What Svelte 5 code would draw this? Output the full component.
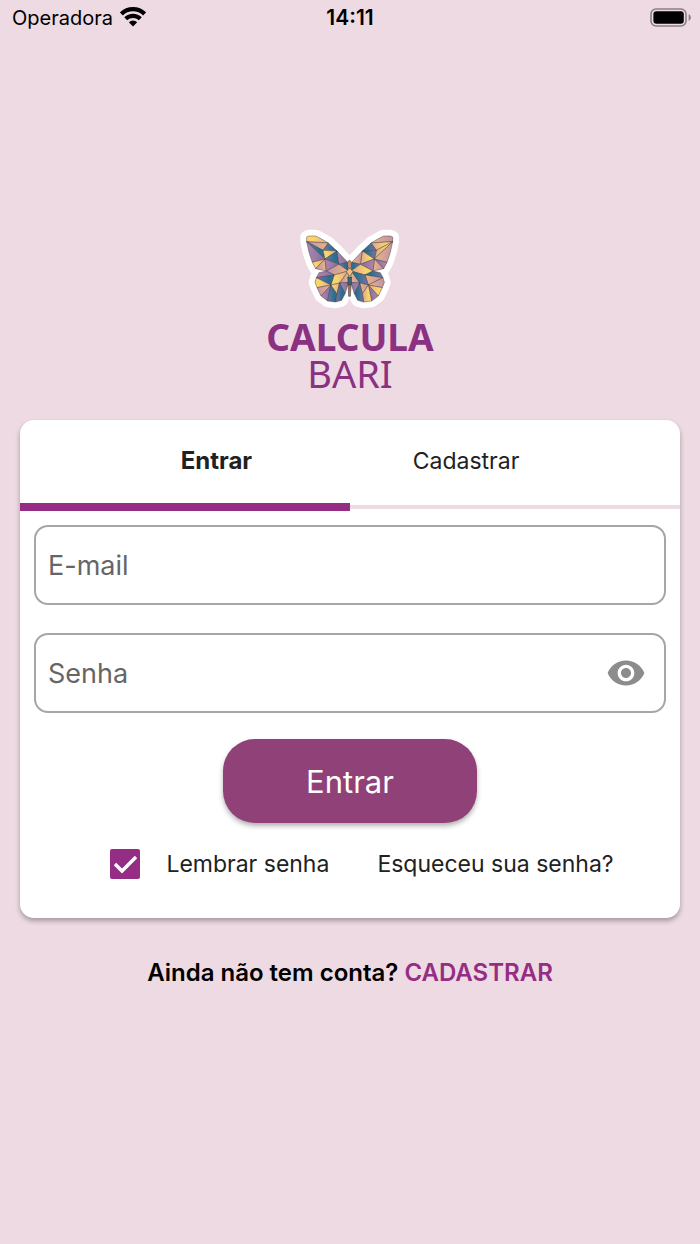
<script>
  let tab = "entrar";
  let email = "";
  let senha = "";
  let showSenha = false;
  let lembrar = true;

  // one side of the butterfly, the other one is mirrored with its own colours
  const wing = [
    { points: "35,36 42,33 62,33 78,41 100,54 35,50", left: "gold", right: "rose" },
    { points: "35,50 100,54 84,76", left: "rose", right: "gold" },
    { points: "35,50 84,76 90,102", left: "sea", right: "gold" },
    { points: "35,50 90,102 52,112 42,82", left: "plum", right: "rose" },
    { points: "52,112 90,102 62,131", left: "gold", right: "plum" },
    { points: "62,131 90,102 94,138", left: "rose", right: "rose" },
    { points: "84,76 100,54 126,78", left: "sea", right: "sea" },
    { points: "84,76 126,78 90,102", left: "gold", right: "sea" },
    { points: "90,102 126,78 132,118", left: "sea", right: "gold" },
    { points: "90,102 132,118 94,138", left: "plum", right: "plum" },
    { points: "126,78 158,112 132,118", left: "plum", right: "rose" },
    { points: "132,118 158,112 160,138", left: "sea", right: "sea" },
    { points: "94,138 132,118 160,138 118,150", left: "rose", right: "gold" },
    { points: "94,138 118,150 64,158 72,143", left: "plum", right: "sea" },
    { points: "64,158 118,150 108,180", left: "sea", right: "rose" },
    { points: "64,158 108,180 66,188 60,172", left: "gold", right: "rose" },
    { points: "66,188 108,180 78,213", left: "rose", right: "gold" },
    { points: "78,213 108,180 98,228", left: "plum", right: "plum" },
    { points: "98,228 108,180 126,206 122,231", left: "sea", right: "gold" },
    { points: "108,180 118,150 160,138 134,174", left: "gold", right: "sea" },
    { points: "108,180 134,174 126,206", left: "gold", right: "rose" },
    { points: "134,174 160,138 161,172", left: "rose", right: "rose" },
    { points: "134,174 161,172 150,206", left: "plum", right: "plum" },
    { points: "126,206 134,174 150,206 140,226 122,231", left: "sea", right: "sea" },
  ];

  const sides = [
    { name: "left", transform: "" },
    { name: "right", transform: "matrix(-1 0 0 1 328 0)" },
  ];
</script>

<svelte:head>
  <title>Calcula Bari</title>
</svelte:head>

<div class="screen">
  <header class="statusBar">
    <div class="carrier">
      <span>Operadora</span>
      <svg width="26" height="20" viewBox="0 0 26 20" aria-hidden="true">
        <g fill="none" stroke="#000" stroke-width="4.2">
          <path d="M1.400 6.900a16.500 16.500 0 0 1 23.200 0" />
          <path d="M5.700 11.800a10.400 10.400 0 0 1 14.600 0" />
        </g>
        <path d="M13 19.400l-4.200-4.200a5.900 5.900 0 0 1 8.400 0z" />
      </svg>
    </div>
    <strong class="clock">14:11</strong>
    <div class="battery">
      <svg width="42" height="20" viewBox="0 0 42 20" aria-hidden="true">
        <rect x="1" y="1" width="35" height="17" rx="5" fill="none" stroke="#8a7f84" stroke-width="1.6" />
        <rect x="3.4" y="3.2" width="30.4" height="12.6" rx="3" />
        <path d="M38.6 6.200c1.500.6 2.200 1.900 2.200 3.400s-.7 2.800-2.200 3.400z" fill="#8a7f84" />
      </svg>
    </div>
  </header>

  <main>
    <div class="logo">
      <svg width="110" height="88" viewBox="0 0 330 264" aria-hidden="true">
        <defs>
          <linearGradient id="gold">
            <stop offset="0.3" stop-color="#fbd56c" />
            <stop offset="1" stop-color="#e0a78b" />
          </linearGradient>
          <linearGradient id="rose">
            <stop offset="0" stop-color="#c193a3" />
            <stop offset="1" stop-color="#eab588" />
          </linearGradient>
          <linearGradient id="sea">
            <stop offset="0" stop-color="#7a769f" />
            <stop offset="0.7" stop-color="#286f90" />
          </linearGradient>
          <linearGradient id="plum">
            <stop offset="0" stop-color="#b286ad" />
            <stop offset="1" stop-color="#80709f" />
          </linearGradient>
          <path
            id="half"
            d="M35 36L42 33 62 33 78 41 100 54 126 78 158 112 164 138 161 180 150 206 140 226 122 231 98 228 78 213 66 188 60 172 64 158 72 143 62 131 52 112 42 82 35 50z"
          />
        </defs>
        <g fill="#fff" stroke="#fff" stroke-width="38" stroke-linejoin="round">
          <use href="#half" />
          <use href="#half" transform="matrix(-1 0 0 1 328 0)" />
        </g>
        {#each sides as side}
          <g transform={side.transform} stroke="#39303f" stroke-width="1.3" stroke-linejoin="round">
            {#each wing as piece}
              <polygon points={piece.points} fill={`url(#${piece[side.name]})`} />
            {/each}
          </g>
        {/each}
        <g stroke="#39303f" stroke-width="1.6">
          <path d="M159 172l3-8h4l3 8-3 42h-5z" fill="#a9784f" />
          <path d="M154 140l10-12 10 12-10 14z" fill="#f3c277" />
          <path d="M158 126v-14q5-12 11 0v14l-5 5z" fill="#c78c62" />
          <path d="M158 156h12l-2 24h-8z" fill="#3c6671" />
        </g>
      </svg>
      <div class="name">CALCULA</div>
      <div class="name light">BARI</div>
    </div>

    <section class="card">
      <div class="tabs" role="tablist">
        <button
          type="button"
          role="tab"
          class:active={tab === "entrar"}
          aria-selected={tab === "entrar"}
          on:click={() => (tab = "entrar")}>Entrar</button
        >
        <button
          type="button"
          role="tab"
          class:active={tab === "cadastrar"}
          aria-selected={tab === "cadastrar"}
          on:click={() => (tab = "cadastrar")}>Cadastrar</button
        >
      </div>
      <div class="indicator" class:right={tab === "cadastrar"}>
        <span class="mark"></span>
        <span class="line"></span>
      </div>

      <form on:submit|preventDefault>
        <div class="field">
          <input type="email" aria-label="E-mail" placeholder="E-mail" bind:value={email} />
        </div>
        <div class="field">
          <input
            type={showSenha ? "text" : "password"}
            aria-label="Senha"
            placeholder="Senha"
            value={senha}
            on:input={(e) => (senha = e.target.value)}
          />
          <button
            type="button"
            class="eye"
            aria-label="Mostrar senha"
            on:click={() => (showSenha = !showSenha)}
          >
            <svg width="40" height="40" viewBox="0 0 24 24" aria-hidden="true">
              <path
                fill="#8c8c8c"
                d="M12 4.500C7 4.500 2.730 7.610 1 12c1.730 4.390 6 7.500 11 7.500s9.270-3.110 11-7.500c-1.730-4.390-6-7.500-11-7.500zM12 17c-2.760 0-5-2.240-5-5s2.240-5 5-5 5 2.240 5 5-2.240 5-5 5zm0-8c-1.660 0-3 1.340-3 3s1.340 3 3 3 3-1.340 3-3-1.340-3-3-3z"
              />
            </svg>
          </button>
        </div>

        <button type="submit" class="submit">Entrar</button>

        <div class="options">
          <label>
            <span class="check">
              <input type="checkbox" bind:checked={lembrar} />
              {#if lembrar}
                <svg width="30" height="30" viewBox="0 0 30 30" aria-hidden="true">
                  <path d="M5 15l7 7L26 8" fill="none" stroke="#fff" stroke-width="3.400" />
                </svg>
              {/if}
            </span>
            Lembrar senha
          </label>
          <a href="#senha">Esqueceu sua senha?</a>
        </div>
      </form>
    </section>

    <p class="signup">Ainda não tem conta? <a href="#cadastrar">CADASTRAR</a></p>
  </main>
</div>

<!-- Styling -->
<style>
  :global(body) {
    margin: 0;
    background-color: #eddae2;
  }

  * {
    box-sizing: border-box;
  }

  .screen {
    min-height: 100vh;
    background-color: #eddae2;
    font-family: Inter, "Liberation Sans", sans-serif;
    color: #212121;
  }

  button,
  input {
    font-family: inherit;
    color: inherit;
  }

  button {
    border: none;
    background: none;
    padding: 0;
    cursor: pointer;
  }

  a {
    color: inherit;
    text-decoration: none;
  }

  .statusBar {
    display: grid;
    grid-template-columns: 1fr auto 1fr;
    align-items: center;
    height: 36px;
    padding: 0 8px;
    font-size: 20px;
    color: #000;
  }

  .carrier {
    display: flex;
    align-items: center;
    gap: 7px;
    padding-left: 4px;
  }

  .carrier svg {
    margin-bottom: 2px;
  }

  .clock {
    font-size: 21px;
    line-height: 24px;
    font-weight: 600;
  }

  .battery {
    display: flex;
    justify-content: flex-end;
  }

  main {
    padding: 189px 20px 40px;
  }

  .logo {
    display: flex;
    flex-direction: column;
    align-items: center;
    margin-bottom: 28px;
    color: #8a3182;
    font-family: "Noto Sans", sans-serif;
  }

  .logo svg {
    margin-bottom: 5px;
  }

  .name {
    font-size: 37px;
    line-height: 37px;
    font-weight: 700;
  }

  .name.light {
    font-size: 38px;
    font-weight: 400;
  }

  .card {
    background-color: #fff;
    border-radius: 14px;
    box-shadow: 0 3px 5px rgba(0, 0, 0, 0.3);
  }

  .tabs {
    display: flex;
    justify-content: space-evenly;
    height: 83px;
    padding-bottom: 2px;
  }

  .tabs button {
    font-size: 23px;
  }

  .tabs .active {
    font-size: 24px;
    font-weight: 700;
  }

  .indicator {
    display: flex;
    align-items: center;
    height: 8px;
  }

  .indicator.right {
    flex-direction: row-reverse;
  }

  .mark {
    flex: 1;
    height: 8px;
    background-color: #952d84;
  }

  .line {
    flex: 1;
    height: 4px;
    background-color: #eddae2;
  }

  form {
    display: flex;
    flex-direction: column;
    padding: 14px 14px 39px;
  }

  .field {
    display: flex;
    align-items: center;
    height: 80px;
    margin-bottom: 28px;
    padding-right: 18px;
    border: 2px solid #a6a6a6;
    border-radius: 14px;
  }

  .field:nth-of-type(2) {
    margin-bottom: 26px;
  }

  .field input {
    flex: 1;
    min-width: 0;
    height: 100%;
    padding: 0 12px;
    border: none;
    outline: none;
    background: none;
    font-size: 27px;
  }

  .field input::placeholder {
    color: #666;
    opacity: 1;
  }

  .field:focus-within {
    border-color: #952d84;
  }

  .eye {
    display: flex;
  }

  .submit {
    align-self: center;
    width: 254px;
    height: 84px;
    border-radius: 32px;
    background-color: #904177;
    box-shadow: 0 3px 5px rgba(0, 0, 0, 0.3);
    color: #fff;
    font-size: 31px;
  }

  .options {
    display: flex;
    justify-content: center;
    align-items: center;
    gap: 48px;
    margin-top: 26px;
    font-size: 23px;
  }

  .options label {
    display: flex;
    align-items: center;
    gap: 26px;
    padding-left: 24px;
  }

  .check {
    display: grid;
  }

  .check input,
  .check svg {
    grid-area: 1 / 1;
  }

  .check svg {
    pointer-events: none;
  }

  .check input {
    appearance: none;
    width: 30px;
    height: 30px;
    margin: 0;
    border: 3px solid #952d84;
    border-radius: 2px;
  }

  .check input:checked {
    background-color: #952d84;
  }

  .signup {
    margin: 41px 0 0;
    text-align: center;
    font-size: 24px;
    line-height: 28px;
    font-weight: 600;
    color: #000;
  }

  .signup a {
    color: #952d84;
  }
</style>
